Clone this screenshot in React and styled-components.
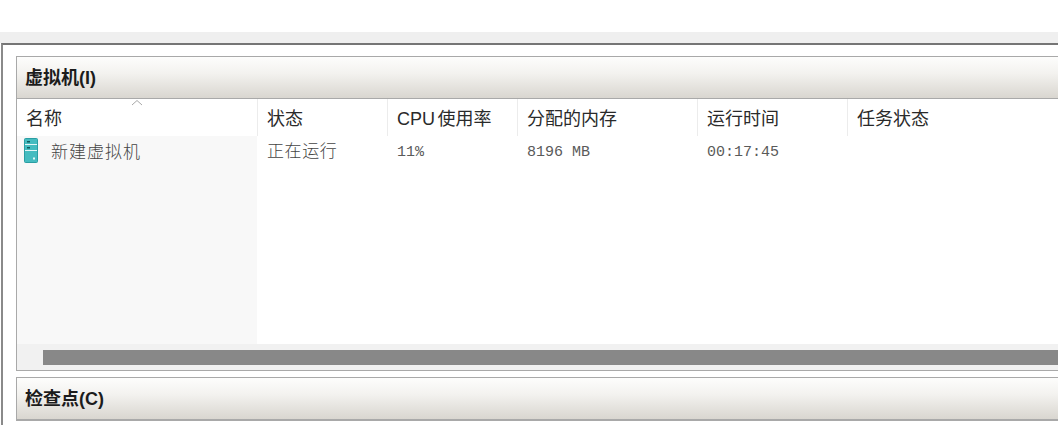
import React from 'react';
import styled, { createGlobalStyle } from 'styled-components';

const GlobalStyle = createGlobalStyle`
  html, body {
    margin: 0;
    padding: 0;
    background: #fff;
    overflow: hidden;
  }
`;

const Page = styled.div`
  width: 1058px;
  height: 425px;
  overflow: hidden;
  background: #fff;
  padding-top: 32px;
  box-sizing: border-box;
  font-family: "Liberation Sans", "Noto Sans CJK SC", sans-serif;
`;

const TopBand = styled.div`
  height: 11px;
  background: #efefef;
`;

const Frame = styled.div`
  border-top: 2px solid #757575;
  border-left: 2px solid #8a8a8a;
  margin-left: 1px;
  padding: 11px 0 0 13px;
  height: 400px;
  box-sizing: border-box;
  display: flex;
  flex-direction: column;
  gap: 6px;
`;

const Panel = styled.section`
  border: 1px solid #a9a9a9;
  border-right: none;
  background: #fff;
  flex: none;
`;

const PanelHead = styled.h2`
  margin: 0;
  height: 42px;
  padding: 0 0 4px 8px;
  box-sizing: border-box;
  display: flex;
  align-items: center;
  font-size: 18px;
  font-weight: 700;
  color: #1c1c1c;
  background: linear-gradient(#fdfdfc, #f3f2ef 40%, #d9d6d0);
  border-bottom: 1px solid #a9a9a9;
`;

const Columns = styled.div`
  display: grid;
  grid-template-columns: 240px 130px 130px 180px 150px 1fr;
`;

const HeadCell = styled.div`
  position: relative;
  height: 37px;
  box-sizing: border-box;
  padding: 8px 0 0 9px;
  border-left: ${props => props.$first ? 'none' : '1px solid #ececec'};
  font-size: 18px;
  line-height: 24px;
  word-spacing: -2.5px;
  color: #2a2a2a;
`;

const SortArrow = styled.svg`
  position: absolute;
  left: 114px;
  top: 0;
  width: 12px;
  height: 7px;
`;

const Rows = styled.div`
  height: 208px;
  display: grid;
  grid-template-columns: 240px 130px 130px 180px 150px 1fr;
  grid-template-rows: 30px;
  background: linear-gradient(to right, #f8f8f8 240px, #fff 240px);
`;

const NameCell = styled.div`
  display: flex;
  align-items: flex-start;
  gap: 13px;
  padding: 2px 0 0 7px;
  font-size: 17px;
  line-height: 25px;
  font-weight: 300;
  color: #444;
  font-family: "Noto Sans CJK SC", sans-serif;
  letter-spacing: 1px;
`;

const Cell = styled.div`
  padding: 2px 0 0 10px;
  font-size: 15px;
  line-height: 30px;
  color: #5a5a5a;
  font-family: "Liberation Mono", "Noto Sans CJK SC", monospace;
`;

const StatusText = styled.span`
  font-size: 17px;
  font-weight: 300;
  letter-spacing: 0.6px;
  color: #444;
`;

const VmIcon = styled.svg`
  width: 14px;
  height: 25px;
  flex: none;
`;

const ScrollTrack = styled.div`
  height: 26px;
  box-sizing: border-box;
  background: #f1f1f1;
  padding: 6px 0 5px 26px;
`;

const ScrollThumb = styled.div`
  height: 15px;
  background: #888;
`;

const columns = ['名称', '状态', 'CPU 使用率', '分配的内存', '运行时间', '任务状态'];

export default function App() {
  return (
    <Page>
      <GlobalStyle />
      <TopBand />
      <Frame>
        <Panel>
          <PanelHead>虚拟机(I)</PanelHead>
          <Columns>
            {columns.map((name, i) => (
              <HeadCell key={name} $first={i === 0}>
                {i === 0 && (
                  <SortArrow viewBox="0 0 12 7">
                    <path d="M1 6 L6 1.5 L11 6" fill="none" stroke="#a8a8a8" strokeWidth="1" />
                  </SortArrow>
                )}
                {name}
              </HeadCell>
            ))}
          </Columns>
          <Rows>
            <NameCell>
              <VmIcon viewBox="0 0 14 25">
                <rect x="0.5" y="0.5" width="13" height="24" rx="1" fill="#45bcc0" stroke="#2a9ea3" />
                <path d="M1 6.5H13M1 12.5H13" stroke="#e4f7f7" strokeWidth="1" />
                <rect x="3" y="3" width="3" height="1.5" fill="#10595c" />
                <rect x="3" y="9" width="3" height="1.5" fill="#10595c" />
                <rect x="9" y="19.5" width="2" height="2" fill="#e4f7f7" />
              </VmIcon>
              新建虚拟机
            </NameCell>
            <Cell><StatusText>正在运行</StatusText></Cell>
            <Cell>11%</Cell>
            <Cell>8196 MB</Cell>
            <Cell>00:17:45</Cell>
            <Cell />
          </Rows>
          <ScrollTrack>
            <ScrollThumb />
          </ScrollTrack>
        </Panel>
        <Panel>
          <PanelHead>检查点(C)</PanelHead>
        </Panel>
      </Frame>
    </Page>
  );
}
